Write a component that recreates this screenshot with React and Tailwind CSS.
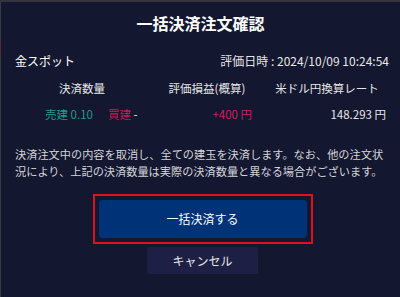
export default function App() {
  return (
    <div
      className="flex h-[297px] w-[400px] flex-col overflow-hidden bg-[#131730] text-white"
      style={{ fontFamily: '"Noto Sans CJK JP", "Noto Sans", sans-serif' }}
    >
      <div className="h-[2px] w-full shrink-0 bg-[#33343d]" />
      <div className="flex flex-1">
        <div className="flex w-px shrink-0 flex-col bg-[#3a3b47]">
          <div className="h-[38px]" />
          <div className="h-[16px] bg-[#5a2a3a]" />
        </div>
        <div className="flex flex-1 flex-col">
          <h1 className="mt-[9px] text-center text-[16px] font-bold leading-[24px]">一括決済注文確認</h1>

          <div className="mt-[17px] flex items-center justify-between pl-[14px] pr-[11px] text-[12px] leading-[18px]">
            <span>金スポット</span>
            <span className="text-[#e6e6e6]">評価日時 : 2024/10/09 10:24:54</span>
          </div>

          <div className="mt-[9px] flex text-[11.5px] leading-[18px] text-[#e6e6e6]">
            <div className="w-[148px] pl-[14px] text-center">決済数量</div>
            <div className="w-[116px] text-center">評価損益(概算)</div>
            <div className="w-[124px] text-center">米ドル円換算レート</div>
          </div>

          <div className="mt-[8px] flex text-[11.5px] leading-[18px]">
            <div className="flex w-[148px] gap-[15px] pl-[44px]">
              <span className="text-[#1b9c8f]">売建 0.10</span>
              <span>
                <span className="text-[#c51a52]">買建</span>
                <span className="text-[#e6e6e6]"> -</span>
              </span>
            </div>
            <div className="w-[103px] text-right text-[#d41d5a]">+400 円</div>
            <div className="w-[134px] text-right text-[#e6e6e6]">148.293 円</div>
          </div>

          <p className="mt-[23px] px-[14px] text-[11.2px] leading-[17px] text-[#d4d4d8]">
            決済注文中の内容を取消し、全ての建玉を決済します。なお、他の注文状況により、上記の決済数量は実際の決済数量と異なる場合がございます。
          </p>

          <div className="mt-[14px] flex flex-col items-center">
            <div className="ml-[4px] border-2 border-[#e0101c] p-[4px]">
              <button className="h-[38px] w-[208px] rounded-[3px] bg-[#003278] text-[12px] text-white">
                一括決済する
              </button>
            </div>
            <button className="mt-[3px] ml-[4px] h-[27px] w-[111px] rounded-[2px] bg-[#1e1f45] text-[12px] text-[#e6e6e6]">
              キャンセル
            </button>
          </div>
        </div>
      </div>
    </div>
  )
}
